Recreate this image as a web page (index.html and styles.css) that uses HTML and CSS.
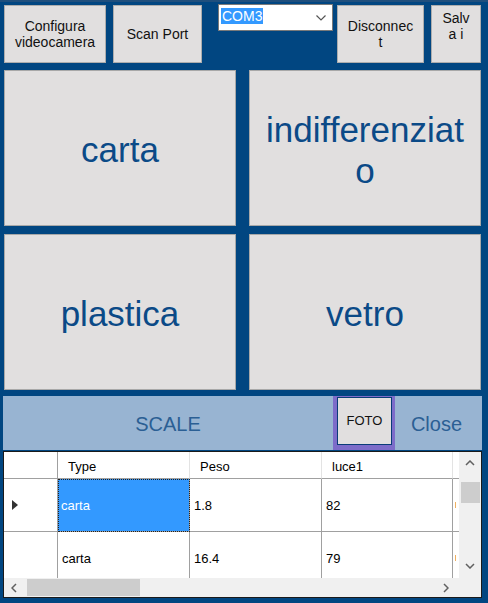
FILE: index.html
```html
<!DOCTYPE html>
<html>
<head>
<meta charset="utf-8">
<link rel="stylesheet" href="styles.css">
</head>
<body>
<div class="app">
  <div class="topbar">
    <div class="btn b-config">Configura<br>videocamera</div>
    <div class="btn b-scan">Scan Port</div>
    <div class="combo">
      <span class="combo-sel">COM3</span>
      <svg class="combo-arrow" width="10" height="6" viewBox="0 0 10 6"><path d="M0.5 0.5 L5 5 L9.5 0.5" fill="none" stroke="#555" stroke-width="1.2"/></svg>
    </div>
    <div class="btn b-disc">Disconnec<br>t</div>
    <div class="btn b-salva">Salv<br>a i</div>
  </div>

  <div class="bins">
    <div class="bin">carta</div>
    <div class="bin">indifferenziat<br>o</div>
    <div class="bin">plastica</div>
    <div class="bin">vetro</div>
  </div>

  <div class="scale">
    <div class="scale-label">SCALE</div>
    <div class="foto-wrap"><div class="foto">FOTO</div></div>
    <div class="close">Close</div>
  </div>

  <div class="grid">
    <div class="grid-main">
      <div class="cells">
        <div class="row head">
          <div class="c rh"></div>
          <div class="c c1">Type</div>
          <div class="c c2">Peso</div>
          <div class="c c3">luce1</div>
          <div class="c c4"></div>
        </div>
        <div class="row r1">
          <div class="c rh"><svg width="6" height="10" viewBox="0 0 6 10"><path d="M0 0 L6 5 L0 10 Z" fill="#333"/></svg></div>
          <div class="c c1 sel">carta</div>
          <div class="c c2">1.8</div>
          <div class="c c3">82</div>
          <div class="c c4"><span class="mark"></span></div>
        </div>
        <div class="row r2">
          <div class="c rh"></div>
          <div class="c c1">carta</div>
          <div class="c c2">16.4</div>
          <div class="c c3">79</div>
          <div class="c c4"><span class="mark"></span></div>
        </div>
      </div>
      <div class="vscroll">
        <svg class="arr" width="10" height="6" viewBox="0 0 10 6"><path d="M1 5 L5 1 L9 5" fill="none" stroke="#606060" stroke-width="1.5"/></svg>
        <div class="vthumb"></div>
        <div class="vspace"></div>
        <svg class="arr" width="10" height="6" viewBox="0 0 10 6"><path d="M1 1 L5 5 L9 1" fill="none" stroke="#606060" stroke-width="1.5"/></svg>
      </div>
    </div>
    <div class="hscroll">
      <div class="htrack">
        <svg class="harr" width="6" height="10" viewBox="0 0 6 10"><path d="M5 1 L1 5 L5 9" fill="none" stroke="#606060" stroke-width="1.5"/></svg>
        <div class="hthumb"></div>
        <div class="hspace"></div>
        <svg class="harr" width="6" height="10" viewBox="0 0 6 10"><path d="M1 1 L5 5 L1 9" fill="none" stroke="#606060" stroke-width="1.5"/></svg>
      </div>
      <div class="corner"></div>
    </div>
  </div>
</div>
</body>
</html>
```

FILE: styles.css
```css
* { box-sizing: border-box; }
html, body { margin: 0; padding: 0; }
body {
  background: #014681;
  font-family: "Liberation Sans", Arial, sans-serif;
  width: 488px;
  height: 603px;
  overflow: hidden;
}
.app {
  border-top: 2px solid #1f4f7d;
}

/* top bar */
.topbar {
  display: flex;
  align-items: flex-start;
  padding: 2px 0 0 4px;
}
.btn {
  background: #e1dfdf;
  border: 1px solid #adadad;
  color: #111;
  font-size: 14px;
  line-height: 16px;
  text-align: center;
  display: flex;
  align-items: center;
  justify-content: center;
  height: 58px;
  margin-top: 1px;
}
.b-config { width: 102px; }
.b-scan { width: 89px; margin-left: 7px; }
.b-disc { width: 87px; margin-left: 4px; }
.b-salva { width: 50px; margin-left: 7px; align-items: flex-start; padding-top: 4px; }
.combo {
  width: 115px;
  height: 27px;
  margin-left: 16px;
  background: #fff;
  border: 1px solid #7a7a7a;
  display: flex;
  align-items: flex-start;
  justify-content: space-between;
  padding: 3px 6px 0 2px;
}
.combo-sel {
  background: #3399ff;
  color: #fff;
  font-size: 14px;
  line-height: 16px;
  padding: 0 1px;
}
.combo-arrow { margin-top: 7px; }

/* bins */
.bins {
  display: grid;
  grid-template-columns: 232px 232px;
  grid-template-rows: 156px 156px;
  column-gap: 13px;
  row-gap: 8px;
  padding-left: 4px;
  margin-top: 7px;
}
.bin {
  background: #e1dfdf;
  border: 1px solid #a8a8a8;
  color: #0b4a87;
  font-size: 35px;
  line-height: 41px;
  text-align: center;
  display: flex;
  align-items: center;
  justify-content: center;
  padding-top: 3px;
}

/* scale panel */
.scale {
  margin: 6px 0 0 3px;
  width: 479px;
  height: 54px;
  background: #98b4d2;
  display: flex;
}
.scale-label {
  width: 330px;
  color: #2b5f94;
  font-size: 20px;
  display: flex;
  align-items: center;
  justify-content: center;
  padding-top: 2px;
}
.foto-wrap {
  width: 62px;
  background: #7d6cc9;
  padding: 1px 3px 5px 4px;
}
.foto {
  height: 100%;
  background: #e1dfdf;
  border: 1px solid #0a3c78;
  color: #111;
  font-size: 13px;
  display: flex;
  align-items: center;
  justify-content: center;
  padding-bottom: 1px;
}
.close {
  flex: 1;
  color: #2b5f94;
  font-size: 20px;
  display: flex;
  align-items: center;
  justify-content: center;
  padding-top: 2px;
  padding-right: 4px;
}

/* data grid */
.grid {
  margin: 1px 0 0 3px;
  width: 479px;
  height: 147px;
  border: 1px solid #1a1a1a;
  background: #fff;
  display: flex;
  flex-direction: column;
}
.grid-main {
  display: flex;
  height: 126px;
}
.cells {
  width: 455px;
  height: 126px;
  overflow: hidden;
  flex-shrink: 0;
}
.row {
  display: flex;
  font-size: 13px;
  color: #000;
}
.row .c {
  flex-shrink: 0;
  display: flex;
  align-items: center;
  border-right: 1px solid #a0a0a0;
  border-bottom: 1px solid #a0a0a0;
  padding-left: 4px;
}
.row.head { height: 27px; }
.row.head .c {
  border-right-color: #e3e3e3;
  padding-left: 10px;
  padding-top: 2px;
}
.row.head .c.rh { border-right-color: #a0a0a0; }
.row.r1, .row.r2 { height: 53px; }
.c.rh { width: 54px; padding-left: 8px !important; }
.c.c1 { width: 132px; }
.c.c2 { width: 132px; }
.c.c3 { width: 131px; }
.c.c4 { width: 10px; border-right: none !important; padding-left: 2px !important; }
.row .c.sel {
  background: #3399ff;
  color: #fff;
  outline: 1px dotted #222;
  outline-offset: -1px;
  padding-left: 3px;
}
.mark {
  display: block;
  width: 1px;
  height: 6px;
  background: #f0b060;
}

.vscroll {
  width: 22px;
  height: 126px;
  background: #f0f0f0;
  display: flex;
  flex-direction: column;
  align-items: center;
  padding: 8px 0 9px;
}
.vthumb {
  width: 19px;
  height: 21px;
  background: #cdcdcd;
  margin-top: 16px;
}
.vspace { flex: 1; }

.hscroll {
  display: flex;
  height: 19px;
}
.htrack {
  width: 455px;
  flex-shrink: 0;
  background: #f0f0f0;
  display: flex;
  align-items: center;
  padding: 0 10px 0 7px;
}
.hthumb {
  width: 113px;
  height: 17px;
  background: #cdcdcd;
  margin-left: 10px;
}
.hspace { flex: 1; }
.corner {
  flex: 1;
  background: #f0f0f0;
}
```
